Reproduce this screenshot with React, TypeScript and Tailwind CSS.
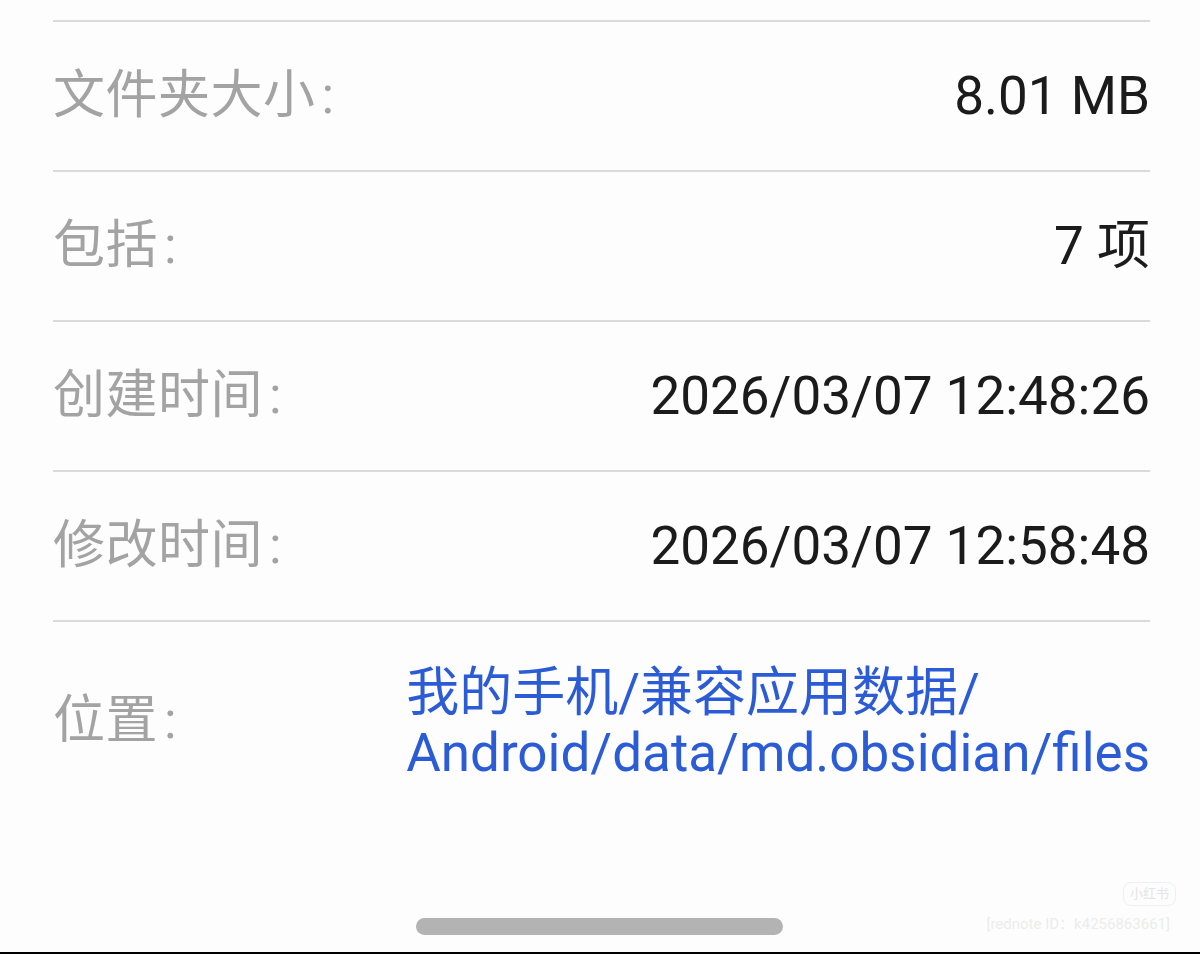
import React from "react";

const rows = [
  { label: "文件夹大小", value: "8.01 MB" },
  { label: "包括", value: "7 项" },
  { label: "创建时间", value: "2026/03/07 12:48:26" },
  { label: "修改时间", value: "2026/03/07 12:58:48" },
];

const font = "font-['Roboto','Noto_Sans_CJK_SC',sans-serif]";

function Label({ text }: { text: string }) {
  return (
    <p className="text-[52px] text-[#a3a3a3] leading-none tracking-[0.5px]">
      {text}
      <span className="ml-[6px]">:</span>
    </p>
  );
}

function App() {
  return (
    <div
      className={`relative h-[954px] w-full overflow-hidden bg-[#fdfdfd] ${font} flex flex-col`}
    >
      <div className="pl-[53px] pr-[50px] pt-[20px]">
        {rows.map((r) => (
          <div
            key={r.label}
            className="flex h-[150px] items-center justify-between border-t-2 border-[#dadada]"
          >
            <Label text={r.label} />
            <p className="text-[53px] text-[#1b1b1b] leading-none">{r.value}</p>
          </div>
        ))}
        <div className="flex h-[200px] items-center justify-between border-t-2 border-[#dadada]">
          <Label text="位置" />
          <div className="text-[53px] leading-[60px] text-[#2b5cd6] pt-[4px]">
            <p>我的手机/兼容应用数据/</p>
            <p>Android/data/md.obsidian/files</p>
          </div>
        </div>
      </div>

      <div className="flex-1" />

      {/* home indicator */}
      <div className="flex justify-center pb-[17px]">
        <div className="ml-[-1px] h-[17px] w-[367px] rounded-full bg-[#b3b3b3]" />
      </div>
      <div className="h-[2px] bg-black" />

      {/* watermark */}
      <div className="absolute right-[24px] top-[882px] rounded-[8px] border border-[#f0f0f0] px-[6px] py-[1px] text-[13px] text-[#e4e4e4]">
        小红书
      </div>
      <p className="absolute right-[30px] top-[913px] text-[15px] text-[#ececec]">
        [rednote ID：k4256863661]
      </p>
    </div>
  );
}

export default App;
